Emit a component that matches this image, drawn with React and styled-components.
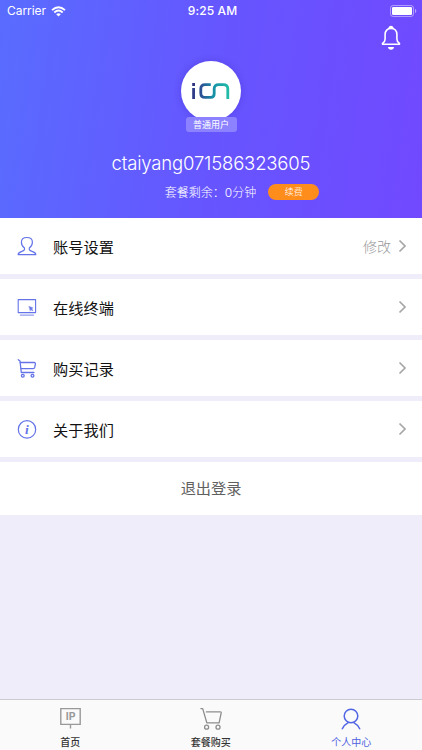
import React from "react";
import styled, { createGlobalStyle } from "styled-components";

const GlobalStyle = createGlobalStyle`
  * {
    box-sizing: border-box;
  }

  body {
    margin: 0;
    font-family: Inter, "Noto Sans CJK SC", sans-serif;
    background: #eeedf9;
  }
`;

const Page = styled.div`
  display: flex;
  flex-direction: column;
  width: 422px;
  height: 750px;
  overflow: hidden;
  background: #eeedf9;
`;

const Header = styled.header`
  height: 218px;
  flex: none;
  display: flex;
  flex-direction: column;
  align-items: center;
  color: #fff;
  background: linear-gradient(98deg, #596cff 0%, #6655ff 52%, #7149ff 100%);
`;

const StatusBar = styled.div`
  width: 100%;
  height: 22px;
  flex: none;
  display: grid;
  grid-template-columns: 1fr auto 1fr;
  align-items: center;
  padding: 0 4px 0 7px;
  font-size: 12px;
  line-height: 22px;

  .carrier {
    display: flex;
    align-items: center;
    gap: 5px;
    letter-spacing: -0.05px;
  }

  .time {
    font-weight: 500;
    letter-spacing: 0.1px;
  }

  .battery {
    display: flex;
    justify-content: flex-end;
    padding: 0 1px 1px 0;
  }
`;

const NavBar = styled.div`
  width: 100%;
  height: 39px;
  flex: none;
  display: flex;
  justify-content: flex-end;
  padding: 3px 21px 0 0;
`;

const Avatar = styled.div`
  width: 60px;
  height: 60px;
  flex: none;
  border-radius: 50%;
  background: #fff;
  box-shadow: 0 0 7px rgba(50, 30, 170, 0.3);
  display: flex;
  align-items: center;
  justify-content: center;
`;

const UserType = styled.div`
  width: 51px;
  height: 15px;
  flex: none;
  margin-top: -4px;
  border-radius: 3px;
  background: #8c82ff;
  font-size: 9px;
  line-height: 16px;
  text-align: center;
`;

const UserName = styled.div`
  margin-top: 19px;
  height: 24px;
  line-height: 24px;
  font-size: 18.5px;
  font-weight: 300;
  letter-spacing: -0.17px;
  white-space: nowrap;
`;

const PlanRow = styled.div`
  display: flex;
  align-items: center;
  gap: 12px;
  height: 18px;
  margin-top: 7px;
  padding-left: 62px;
  font-size: 12px;
  font-weight: 300;
`;

const RenewButton = styled.button`
  width: 51px;
  height: 16px;
  margin-top: 1px;
  padding: 0;
  border: 0;
  border-radius: 8px;
  background: #ff8d1c;
  color: #fff;
  font: 300 9px/16px "Noto Sans CJK SC", sans-serif;
`;

const MenuList = styled.div`
  display: flex;
  flex-direction: column;
  gap: 5px;
`;

const MenuRow = styled.div`
  height: 56px;
  display: flex;
  align-items: center;
  padding: 0 15px 0 17px;
  background: #fff;
  color: #111;

  .label {
    flex: 1;
    margin-left: 16px;
    padding-bottom: 1px;
    font-size: 15.2px;
    letter-spacing: 0.1px;
  }

  .hint {
    margin-right: 7px;
    padding-bottom: 1px;
    font-size: 14px;
    font-weight: 300;
    color: #999;
  }
`;

const Logout = styled.div`
  height: 53px;
  background: #fff;
  color: #606060;
  font-size: 15.2px;
  line-height: 54px;
  text-align: center;
`;

const TabBar = styled.nav`
  height: 51px;
  margin-top: auto;
  display: grid;
  grid-template-columns: repeat(3, 140.5px);
  border-top: 1px solid #cbcbd4;
  background: #fafafa;
`;

const Tab = styled.div`
  display: flex;
  flex-direction: column;
  align-items: center;
  padding-top: 6px;
  gap: 5px;
  font-size: 10px;
  line-height: 14px;
  font-weight: ${(props) => (props.$active ? 400 : 500)};
  color: ${(props) => (props.$active ? "#4d61df" : "#333")};
`;

const LineIcon = ({ size = 22, color = "#6474e8", width = 1.2, children }) => (
  <svg
    width={size}
    height={size}
    viewBox={`0 0 ${size} ${size}`}
    fill="none"
    stroke={color}
    strokeWidth={width}
    strokeLinecap="round"
    strokeLinejoin="round"
  >
    {children}
  </svg>
);

const WifiIcon = () => (
  <svg width="15" height="11" viewBox="0 0 15 11" fill="none" stroke="#fff" strokeWidth="1.9">
    <path d="M1 4.1Q7.5-1.8 14 4.1M3.3 6.5Q7.5 2.7 11.7 6.5" />
    <path d="M5.2 8.2Q7.5 6.3 9.8 8.2L7.5 10.6Z" fill="#fff" stroke="none" />
  </svg>
);

const BatteryIcon = () => (
  <svg width="27" height="12" viewBox="0 0 27 12">
    <rect x="0.5" y="0.5" width="23" height="11" rx="2.6" fill="none" stroke="#fff" strokeOpacity="0.45" />
    <rect x="2" y="2" width="20" height="8" rx="1.3" fill="#fff" />
    <path d="M25 4c1.7.5 1.7 3.5 0 4Z" fill="#fff" fillOpacity="0.5" />
  </svg>
);

const BellIcon = () => (
  <svg width="20" height="26" viewBox="0 0 20 26" fill="none" stroke="#fff" strokeWidth="1.6" strokeLinejoin="round">
    <path d="M8.2 3.4a1.8 1.8 0 1 1 3.6 0M10 3.4C6.3 3.4 4.1 6 4.1 9.4V14c0 1.8-.8 3.2-2.3 4.1-.6.5-.4 1.2.4 1.2h15.6c.8 0 1-.7.4-1.2-1.5-.9-2.3-2.3-2.3-4.1V9.4C15.9 6 13.7 3.4 10 3.4Z" />
    <path d="M7 22h6c-.2 1.8-1.2 2.8-3 2.8S7.2 23.8 7 22Z" fill="#fff" stroke="none" />
  </svg>
);

const Logo = () => (
  <svg width="40" height="18" viewBox="0 0 40 18" fill="none">
    <defs>
      <linearGradient id="brand" gradientUnits="userSpaceOnUse" x1="0" y1="0" x2="38" y2="0">
        <stop offset="0" stopColor="#303583" />
        <stop offset="0.28" stopColor="#2c5295" />
        <stop offset="0.58" stopColor="#168fa6" />
        <stop offset="1" stopColor="#22bda7" />
      </linearGradient>
    </defs>
    <g stroke="url(#brand)" strokeWidth="2.8">
      <path d="M2.6 5.9V17M19.8 2.6H14.2Q9.8 2.6 9.8 6.8V11.2Q9.8 15.4 14.2 15.4H19.6Q23.2 15.4 23.2 11.8V6.8Q23.2 2.6 27.6 2.6H32.4Q36.8 2.6 36.8 6.8V17" />
    </g>
    <rect x="1.2" y="1" width="2.8" height="3" fill="#303583" />
  </svg>
);

const Chevron = () => (
  <svg width="9" height="14" viewBox="0 0 9 14" fill="none" stroke="#a6a6a6" strokeWidth="1.7">
    <path d="M1.5 1.5 7 7l-5.5 5.5" />
  </svg>
);

const AccountIcon = () => (
  <LineIcon size={20}>
    <path d="M7.5 13.4v-1.3C5.2 10.5 4.4 8.9 4.4 6.3c0-3 2.1-4.8 5.4-4.8s5.6 1.8 5.6 4.8c0 2.6-.9 4.2-3.1 5.8v1.3c.1 1.1 1.1 1.5 2.7 2 2.4.7 3.7 1.6 3.8 3.2H1.1c.1-1.6 1.4-2.5 3.8-3.2 1.6-.5 2.5-.9 2.6-2Z" />
  </LineIcon>
);

const TerminalIcon = () => (
  <LineIcon size={20} width={1.1}>
    <rect x="1.2" y="2.6" width="17.4" height="13" />
    <path d="M3.4 18.1h13.2" strokeWidth="1.3" strokeOpacity="0.7" />
    <path d="m12 9.3 4.2 1.6-1.6.8 1.4 1.5-.8.7-1.4-1.6-.6 1.6Z" fill="#6474e8" strokeWidth="0.3" />
  </LineIcon>
);

const OrdersIcon = () => (
  <LineIcon size={20} width={1.3}>
    <path d="M1.3 1.7 3 3l1.3 11.5h12.6" />
    <path d="M3.3 4.5h13.8c1 0 1.4.5 1.3 1.3l-.7 3.6c-.2.9-.6 1.2-1.5 1.2H4" />
    <circle cx="5.8" cy="17.8" r="1.4" />
    <circle cx="15.5" cy="17.8" r="1.4" />
  </LineIcon>
);

const AboutIcon = () => (
  <LineIcon size={20}>
    <circle cx="10" cy="10.4" r="8.7" />
    <text
      x="10"
      y="14.7"
      textAnchor="middle"
      fontFamily="Liberation Serif, serif"
      fontStyle="italic"
      fontWeight="700"
      fontSize="13.5"
      fill="#6474e8"
      stroke="none"
    >
      i
    </text>
  </LineIcon>
);

const HomeIcon = () => (
  <LineIcon size={24} color="#999" width={1.4}>
    <path d="M2.8 2.6h19.4v15.8H2.8ZM12.5 18.4v4.2" strokeLinejoin="miter" strokeLinecap="butt" />
    <text x="12.6" y="14.2" textAnchor="middle" fontFamily="Inter, sans-serif" fontWeight="700" fontSize="10.5" fill="#999" stroke="none">
      IP
    </text>
  </LineIcon>
);

const ShopIcon = () => (
  <LineIcon size={24} color="#8d8d8d" width={1.3}>
    <path d="M1.9 2.6h1.8l4.1 14.2h12.3l2.1-9.9c.1-.7-.1-1-.8-1H7.4" />
    <circle cx="7.6" cy="21.2" r="2" />
    <circle cx="19" cy="21.2" r="2" />
  </LineIcon>
);

const ProfileIcon = () => (
  <LineIcon size={24} color="#5265e5" width={1.5}>
    <circle cx="12" cy="10" r="6.8" />
    <path d="M3.3 22.8c1.4-3 3.4-4.9 5.9-6.2M14.8 16.6c2.5 1.3 4.5 3.2 5.9 6.2" />
  </LineIcon>
);

const menuItems = [
  { id: 0, label: "账号设置", Icon: AccountIcon, hint: "修改" },
  { id: 1, label: "在线终端", Icon: TerminalIcon },
  { id: 2, label: "购买记录", Icon: OrdersIcon },
  { id: 3, label: "关于我们", Icon: AboutIcon },
];

const tabs = [
  { id: 0, label: "首页", Icon: HomeIcon },
  { id: 1, label: "套餐购买", Icon: ShopIcon },
  { id: 2, label: "个人中心", Icon: ProfileIcon, active: true },
];

const App = () => {
  return (
    <>
      <GlobalStyle />
      <Page>
        <Header>
          <StatusBar>
            <div className="carrier">
              Carrier
              <WifiIcon />
            </div>
            <div className="time">9:25 AM</div>
            <div className="battery">
              <BatteryIcon />
            </div>
          </StatusBar>
          <NavBar>
            <BellIcon />
          </NavBar>
          <Avatar>
            <Logo />
          </Avatar>
          <UserType>普通用户</UserType>
          <UserName>ctaiyang071586323605</UserName>
          <PlanRow>
            <span>套餐剩余：0分钟</span>
            <RenewButton>续费</RenewButton>
          </PlanRow>
        </Header>
        <MenuList>
          {menuItems.map(({ id, label, Icon, hint }) => (
            <MenuRow key={id}>
              <Icon />
              <span className="label">{label}</span>
              {hint && <span className="hint">{hint}</span>}
              <Chevron />
            </MenuRow>
          ))}
          <Logout>退出登录</Logout>
        </MenuList>
        <TabBar>
          {tabs.map(({ id, label, Icon, active }) => (
            <Tab key={id} $active={active}>
              <Icon />
              <span>{label}</span>
            </Tab>
          ))}
        </TabBar>
      </Page>
    </>
  );
};

export default App;
